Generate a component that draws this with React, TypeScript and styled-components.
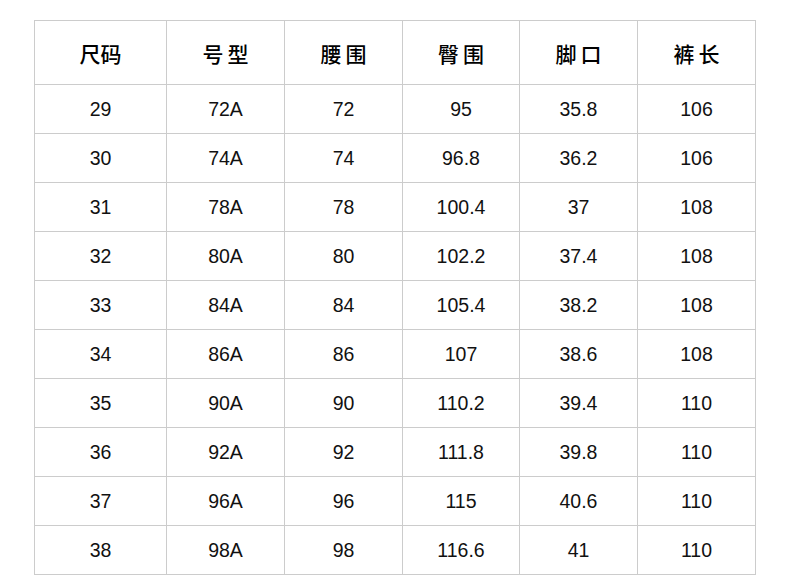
import styled, { createGlobalStyle } from 'styled-components'

const GlobalStyle = createGlobalStyle`
    body {
        margin: 0;
        background: #ffffff;
        font-family: "Liberation Sans", Arial, sans-serif;
    }
`

const SPage = styled.div`
    width: 790px;
    height: 575px;
    padding: 20px 0 0 34px;
    box-sizing: border-box;
    overflow: hidden;
`

const STable = styled.div`
    display: grid;
    grid-template-columns: 132px 118px 118px 117px 118px 118px;
    grid-template-rows: 64px;
    grid-auto-rows: 49px;
    width: max-content;
    border-top: 1px solid #cccccc;
    border-left: 1px solid #cccccc;
`

const SCell = styled.div`
    display: flex;
    align-items: center;
    justify-content: center;
    border-right: 1px solid #cccccc;
    border-bottom: 1px solid #cccccc;
    color: #111111;
    font-size: 19.5px;
`

const SHead = styled(SCell)<{ $spaced?: boolean }>`
    font-family: "Noto Sans CJK SC", "Liberation Sans", sans-serif;
    font-size: 21px;
    font-weight: 500;
    color: #000000;
    padding-top: 1px;
    letter-spacing: ${p => (p.$spaced ? '4px' : '0')};
    padding-left: ${p => (p.$spaced ? '4px' : '0')};
`

const heads = [
    { label: '尺码', spaced: false },
    { label: '号型', spaced: true },
    { label: '腰围', spaced: true },
    { label: '臀围', spaced: true },
    { label: '脚口', spaced: true },
    { label: '裤长', spaced: true },
]

const rows = [
    ['29', '72A', '72', '95', '35.8', '106'],
    ['30', '74A', '74', '96.8', '36.2', '106'],
    ['31', '78A', '78', '100.4', '37', '108'],
    ['32', '80A', '80', '102.2', '37.4', '108'],
    ['33', '84A', '84', '105.4', '38.2', '108'],
    ['34', '86A', '86', '107', '38.6', '108'],
    ['35', '90A', '90', '110.2', '39.4', '110'],
    ['36', '92A', '92', '111.8', '39.8', '110'],
    ['37', '96A', '96', '115', '40.6', '110'],
    ['38', '98A', '98', '116.6', '41', '110'],
]

const App = () => {
    return (
        <SPage>
            <GlobalStyle />
            <STable>
                {heads.map(h => (
                    <SHead key={h.label} $spaced={h.spaced}>{h.label}</SHead>
                ))}
                {rows.map((row, i) =>
                    row.map((v, j) => <SCell key={`${i}-${j}`}>{v}</SCell>)
                )}
            </STable>
        </SPage>
    )
}

export default App
